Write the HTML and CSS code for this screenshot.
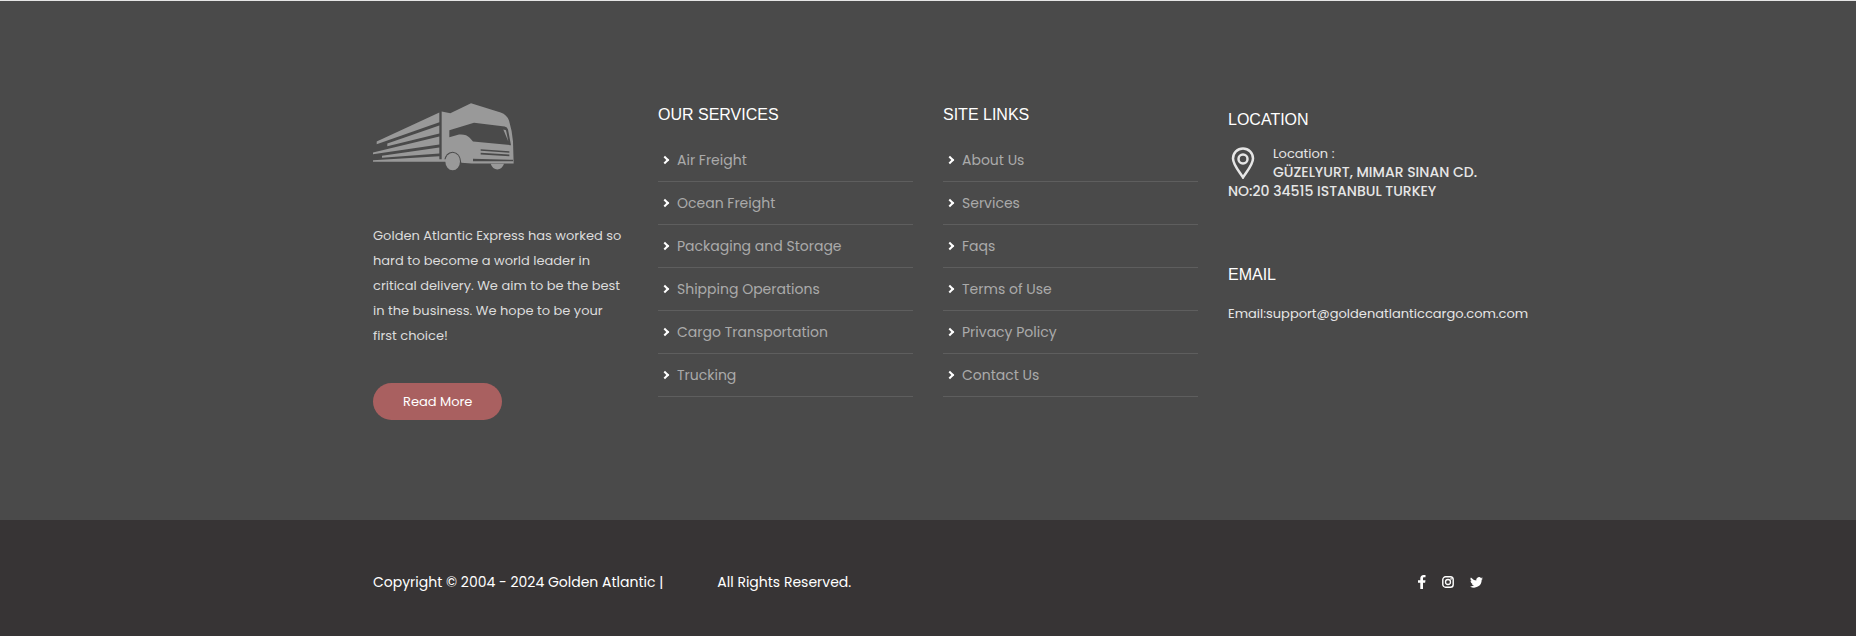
FILE: index.html
```
<!DOCTYPE html>
<html lang="en">

<head>
    <meta charset="utf-8">
    <meta name="viewport" content="width=device-width, initial-scale=1">
    <title>Golden Atlantic Express</title>
    <link rel="stylesheet" href="styles.css">
</head>

<body>
    <footer class="site-footer">
        <div class="footer-top">
            <div class="container footer-columns">
                <div class="widget about">
                    <a class="logo" href="#" aria-label="Golden Atlantic Express">
                        <svg viewBox="39 36 423 206" width="141" height="69" fill="#999">
                            <!-- speed lines -->
                            <path d="M50 154 238 67V96L50 162z"/>
                            <path d="M82 160 238 106V130L82 168z"/>
                            <path d="M39 187 238 139V163L39 192z"/>
                            <path d="M66 197 238 172V190L66 203z"/>
                            <path d="M39 210 238 198V207H258V215H39z"/>
                            <!-- cab -->
                            <path fill-rule="evenodd" d="M245 64 271 69 333 39 422 67Q441 74 447 91Q456 120 459 154L461 220H335L304 218Q301 187 278 185Q256 187 252 212H245zM268 120V141L297 133Q319 131 329 143L339 154 453 165 444 118Q442 111 434 109L342 98zM362 177V182L448 188V183zM362 188V193L448 198V193zM339 206V213H459V209z"/>
                            <path d="M430 118 438 120 445 154z"/>
                            <ellipse cx="278" cy="214" rx="22" ry="26"/>
                            <path d="M392 221H432Q426 238 412 238T392 221z"/>
                        </svg>
                    </a>
                    <p>Golden Atlantic Express has worked so hard to become a world leader in critical delivery. We aim to be the best in the business. We hope to be your first choice!</p>
                    <a class="btn" href="#">Read More</a>
                </div>
                <div class="widget">
                    <h2>OUR SERVICES</h2>
                    <ul class="links">
                        <li><a href="#">Air Freight</a></li>
                        <li><a href="#">Ocean Freight</a></li>
                        <li><a href="#">Packaging and Storage</a></li>
                        <li><a href="#">Shipping Operations</a></li>
                        <li><a href="#">Cargo Transportation</a></li>
                        <li><a href="#">Trucking</a></li>
                    </ul>
                </div>
                <div class="widget">
                    <h2>SITE LINKS</h2>
                    <ul class="links">
                        <li><a href="#">About Us</a></li>
                        <li><a href="#">Services</a></li>
                        <li><a href="#">Faqs</a></li>
                        <li><a href="#">Terms of Use</a></li>
                        <li><a href="#">Privacy Policy</a></li>
                        <li><a href="#">Contact Us</a></li>
                    </ul>
                </div>
                <div class="widget contact">
                    <h2>LOCATION</h2>
                    <address>
                        <svg class="pin" viewBox="0 0 30 32" width="30" height="32" fill="none" stroke="#e6e6e6">
                            <path stroke-width="2.500" d="M15 30.500C12.500 26 5 18 5 11.500A10 10 0 0 1 25 11.500C25 18 17.500 26 15 30.500z"/>
                            <circle stroke-width="2.500" cx="15" cy="12" r="4.500"/>
                        </svg>
                        Location :<br>
                        <strong>GÜZELYURT, MIMAR SINAN CD. NO:20 34515 ISTANBUL TURKEY</strong>
                    </address>
                    <h2>EMAIL</h2>
                    <a class="email" href="mailto:support@goldenatlanticcargo.com.com">Email:support@goldenatlanticcargo.com.com</a>
                </div>
            </div>
        </div>
        <div class="footer-bottom">
            <div class="container footer-bar">
                <p class="copyright"><span>Copyright © 2004 - 2024 Golden Atlantic |</span> <span>All Rights Reserved.</span></p>
                <div class="social">
                    <a href="#" aria-label="Facebook">
                        <svg viewBox="0 0 8 14" width="8" height="14"><path d="M2.300 14V7.800H0V5.300H2.300V3.500C2.300 1.200 3.600 0 5.600 0L7.500.1V2.300H6.200C5.200 2.300 5 2.800 5 3.500V5.300H7.500L7.100 7.800H5V14z"/></svg>
                    </a>
                    <a href="#" aria-label="Instagram">
                        <svg viewBox="0 0 12 12" width="12" height="12"><rect x=".8" y=".8" width="10.400" height="10.400" rx="2.800" fill="none" stroke="#fff" stroke-width="1.400"/><circle cx="6" cy="6" r="2.500" fill="none" stroke="#fff" stroke-width="1.300"/><circle cx="9.100" cy="2.900" r=".8"/></svg>
                    </a>
                    <a href="#" aria-label="Twitter">
                        <svg viewBox="0 0 24 20" width="13" height="11"><path d="M24 2.400a10 10 0 0 1-2.800.8A5 5 0 0 0 23.300.4a10 10 0 0 1-3.100 1.200 4.900 4.900 0 0 0-8.400 4.500A14 14 0 0 1 1.700.9a4.900 4.900 0 0 0 1.500 6.600 5 5 0 0 1-2.200-.6 4.900 4.900 0 0 0 3.900 4.900 5 5 0 0 1-2.200.1 4.900 4.900 0 0 0 4.600 3.400A10 10 0 0 1 0 17.300a14 14 0 0 0 21.500-12.400A10 10 0 0 0 24 2.400z"/></svg>
                    </a>
                </div>
            </div>
        </div>
    </footer>
</body>

</html>
```
FILE: styles.css
```
*,
*::before {
    box-sizing: border-box;
}
body {
    margin: 0;
    background-color: #373435;
    color: #fff;
    font-family: Poppins, Inter, "Open Sans", sans-serif;
    font-size: 13px;
}
a {
    color: inherit;
    text-decoration: none;
}
.container {
    max-width: 1140px;
    margin: 0 auto;
    padding: 0 15px;
}
.footer-top {
    background-color: #4a4a4a;
    border-top: 1px solid #e6e6e6;
    padding: 101px 0 100px;
}
.footer-columns {
    display: grid;
    grid-template-columns: repeat(4, minmax(0, 1fr));
    gap: 30px;
}
.widget {
    padding-top: 1px;
}
.widget h2 {
    margin: 0;
    font-family: "Liberation Sans", Arial, sans-serif;
    font-size: 16px;
    font-weight: 400;
    line-height: 24px;
}
.about {
    padding-top: 0;
}
.logo {
    display: block;
    height: 121px;
}
.about p {
    margin: 0 0 35px;
    color: #dcdcdc;
    line-height: 25px;
}
.btn {
    display: inline-block;
    padding: 0 30px;
    border-radius: 19px;
    background-color: #a96060;
    line-height: 37px;
}
.links {
    list-style: none;
    margin: 12px 0 0;
    padding: 0;
}
.links li {
    border-bottom: 1px solid #5e5e5e;
}
.links a {
    display: flex;
    align-items: center;
    height: 42px;
    padding-left: 4px;
    color: #aaa;
    font-size: 14px;
}
.links a::before {
    content: "";
    width: 6px;
    height: 6px;
    margin-right: 9px;
    border: solid #fff;
    border-width: 2px 2px 0 0;
    transform: rotate(45deg);
}
.contact {
    padding-top: 6px;
    color: #e6e6e6;
}
.contact h2 {
    color: #fff;
}
.contact address {
    margin: 12px 0 62px;
    font-style: normal;
    line-height: 19px;
}
.contact strong {
    font-size: 14px;
    font-weight: 500;
}
.pin {
    float: left;
    margin: 3px 15px 0 0;
}
.email {
    display: block;
    margin-top: 17px;
    line-height: 20px;
    white-space: nowrap;
}
.footer-bottom {
    background-color: #373435;
    padding: 49px 0 42px;
}
.footer-bar {
    display: flex;
    align-items: center;
    justify-content: space-between;
}
.copyright {
    display: flex;
    gap: 54px;
    margin: 0;
    font-size: 14px;
    line-height: 26px;
}
.social {
    display: flex;
    align-items: center;
    gap: 16px;
}
.social a {
    display: flex;
}
.social svg {
    fill: #fff;
}
```
